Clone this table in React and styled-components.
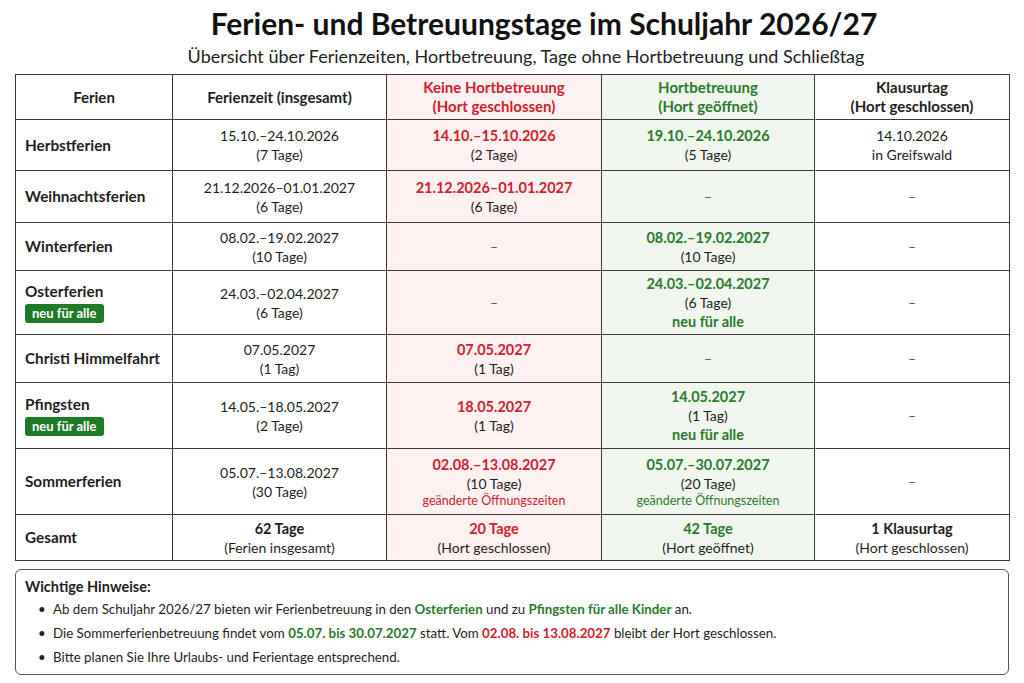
import React from "react";
import styled, { createGlobalStyle } from "styled-components";

const RED = "#d0222c";
const GREEN = "#2a7a2e";
const INK = "#1e1e1e";

const Global = createGlobalStyle`
  html, body { margin: 0; padding: 0; background: #fff; }
  body { font-family: Lato, "Open Sans", "Noto Sans", sans-serif; color: ${INK}; }
  * { box-sizing: border-box; }
`;

const Page = styled.div`
  width: 1024px;
  height: 683px;
  padding: 4px 15px 0 15px;
  display: flex;
  flex-direction: column;
`;

const Title = styled.h1`
  margin: 0;
  padding-left: 64px;
  text-align: center;
  font-size: 30px;
  line-height: 38px;
  font-weight: 700;
  color: #111;
`;

const Subtitle = styled.div`
  padding-left: 28px;
  text-align: center;
  font-size: 18px;
  line-height: 24px;
  margin-top: 2px;
  margin-bottom: 6px;
  color: #222;
`;

const Table = styled.table`
  border-collapse: collapse;
  table-layout: fixed;
  width: 994px;
  font-size: 14px;
  line-height: 19px;
`;

const Col = styled.col``;

const Row = styled.tr`
  height: ${(p) => p.$h}px;
`;

const tones = {
  red: { bg: "#fdf1f1", fg: RED },
  green: { bg: "#f1f7ef", fg: GREEN },
  plain: { bg: "#fff", fg: INK },
};

const Cell = styled.td`
  border: 1px solid #3a3a3a;
  padding: 0 6px;
  text-align: center;
  vertical-align: middle;
  background: ${(p) => tones[p.$tone || "plain"].bg};
  color: ${INK};
`;

const HeadCell = styled(Cell).attrs({ as: "th" })`
  font-weight: 700;
  font-size: 15px;
  color: ${(p) => tones[p.$tone || "plain"].fg};
`;

const NameCell = styled(Cell)`
  text-align: left;
  padding-left: 9px;
  font-weight: 700;
  font-size: 15.3px;
`;

const Strong = styled.div`
  font-weight: 700;
  font-size: 14.5px;
  color: ${(p) => tones[p.$tone || "plain"].fg};
`;

const Small = styled.div`
  font-size: 12.5px;
  line-height: 16px;
  color: ${(p) => tones[p.$tone || "plain"].fg};
`;

const NewNote = styled.div`
  font-weight: 700;
  font-size: 14.5px;
  color: ${GREEN};
`;

const Badge = styled.span`
  display: inline-block;
  margin-top: 3px;
  background: #1f7a29;
  color: #fff;
  font-size: 13px;
  line-height: 19px;
  font-weight: 700;
  padding: 0 7px;
  border-radius: 3px;
`;

const Dash = styled.span`
  color: #555;
`;

const Notes = styled.div`
  margin-top: 8px;
  border: 1px solid #555;
  border-radius: 6px;
  padding: 6px 10px 6px 9px;
  height: 106px;
  font-size: 13.3px;
`;

const NotesTitle = styled.div`
  font-weight: 700;
  font-size: 14.5px;
  line-height: 21px;
`;

const List = styled.ul`
  margin: 0;
  padding-left: 28px;
  list-style: none;
`;

const Item = styled.li`
  position: relative;
  line-height: 24px;
  &::before {
    content: "•";
    position: absolute;
    left: -15px;
    color: #222;
  }
`;

const Hi = styled.b`
  color: ${(p) => (p.$tone === "red" ? RED : GREEN)};
`;

const rows = [
  {
    name: "Herbstferien",
    h: 51,
    all: ["15.10.–24.10.2026", "(7 Tage)"],
    closed: ["14.10.–15.10.2026", "(2 Tage)"],
    open: ["19.10.–24.10.2026", "(5 Tage)"],
    klausur: ["14.10.2026", "in Greifswald"],
  },
  {
    name: "Weihnachtsferien",
    h: 52,
    all: ["21.12.2026–01.01.2027", "(6 Tage)"],
    closed: ["21.12.2026–01.01.2027", "(6 Tage)"],
  },
  {
    name: "Winterferien",
    h: 48,
    all: ["08.02.–19.02.2027", "(10 Tage)"],
    open: ["08.02.–19.02.2027", "(10 Tage)"],
  },
  {
    name: "Osterferien",
    badge: true,
    h: 64,
    all: ["24.03.–02.04.2027", "(6 Tage)"],
    open: ["24.03.–02.04.2027", "(6 Tage)"],
    openNew: true,
  },
  {
    name: "Christi Himmelfahrt",
    h: 48,
    all: ["07.05.2027", "(1 Tag)"],
    closed: ["07.05.2027", "(1 Tag)"],
  },
  {
    name: "Pfingsten",
    badge: true,
    h: 66,
    all: ["14.05.–18.05.2027", "(2 Tage)"],
    closed: ["18.05.2027", "(1 Tag)"],
    open: ["14.05.2027", "(1 Tag)"],
    openNew: true,
  },
  {
    name: "Sommerferien",
    h: 66,
    all: ["05.07.–13.08.2027", "(30 Tage)"],
    closed: ["02.08.–13.08.2027", "(10 Tage)"],
    open: ["05.07.–30.07.2027", "(20 Tage)"],
    changed: true,
  },
];

function Pair({ data, tone, changed, isNew }) {
  if (!data) return <Dash>–</Dash>;
  return (
    <>
      {tone ? <Strong $tone={tone}>{data[0]}</Strong> : <div>{data[0]}</div>}
      <div>{data[1]}</div>
      {changed && <Small $tone={tone}>geänderte Öffnungszeiten</Small>}
      {isNew && <NewNote>neu für alle</NewNote>}
    </>
  );
}

export default function App() {
  return (
    <>
      <Global />
      <Page>
        <Title>Ferien- und Betreuungstage im Schuljahr 2026/27</Title>
        <Subtitle>
          Übersicht über Ferienzeiten, Hortbetreuung, Tage ohne Hortbetreuung und Schließtag
        </Subtitle>
        <Table>
          <colgroup>
            <Col style={{ width: 157 }} />
            <Col style={{ width: 214 }} />
            <Col style={{ width: 215 }} />
            <Col style={{ width: 213 }} />
            <Col style={{ width: 195 }} />
          </colgroup>
          <thead>
            <Row $h={45}>
              <HeadCell>Ferien</HeadCell>
              <HeadCell>Ferienzeit (insgesamt)</HeadCell>
              <HeadCell $tone="red">
                Keine Hortbetreuung
                <br />
                (Hort geschlossen)
              </HeadCell>
              <HeadCell $tone="green">
                Hortbetreuung
                <br />
                (Hort geöffnet)
              </HeadCell>
              <HeadCell>
                Klausurtag
                <br />
                (Hort geschlossen)
              </HeadCell>
            </Row>
          </thead>
          <tbody>
            {rows.map((r) => (
              <Row key={r.name} $h={r.h}>
                <NameCell>
                  <div>{r.name}</div>
                  {r.badge && <Badge>neu für alle</Badge>}
                </NameCell>
                <Cell>
                  <Pair data={r.all} />
                </Cell>
                <Cell $tone="red">
                  <Pair data={r.closed} tone="red" changed={r.changed} />
                </Cell>
                <Cell $tone="green">
                  <Pair data={r.open} tone="green" changed={r.changed} isNew={r.openNew} />
                </Cell>
                <Cell>
                  <Pair data={r.klausur} />
                </Cell>
              </Row>
            ))}
            <Row $h={46}>
              <NameCell>Gesamt</NameCell>
              <Cell>
                <Strong>62 Tage</Strong>
                <div>(Ferien insgesamt)</div>
              </Cell>
              <Cell $tone="red">
                <Strong $tone="red">20 Tage</Strong>
                <div>(Hort geschlossen)</div>
              </Cell>
              <Cell $tone="green">
                <Strong $tone="green">42 Tage</Strong>
                <div>(Hort geöffnet)</div>
              </Cell>
              <Cell>
                <Strong>1 Klausurtag</Strong>
                <div>(Hort geschlossen)</div>
              </Cell>
            </Row>
          </tbody>
        </Table>
        <Notes>
          <NotesTitle>Wichtige Hinweise:</NotesTitle>
          <List>
            <Item>
              Ab dem Schuljahr 2026/27 bieten wir Ferienbetreuung in den <Hi>Osterferien</Hi> und zu{" "}
              <Hi>Pfingsten für alle Kinder</Hi> an.
            </Item>
            <Item>
              Die Sommerferienbetreuung findet vom <Hi>05.07. bis 30.07.2027</Hi> statt. Vom{" "}
              <Hi $tone="red">02.08. bis 13.08.2027</Hi> bleibt der Hort geschlossen.
            </Item>
            <Item>Bitte planen Sie Ihre Urlaubs- und Ferientage entsprechend.</Item>
          </List>
        </Notes>
      </Page>
    </>
  );
}
